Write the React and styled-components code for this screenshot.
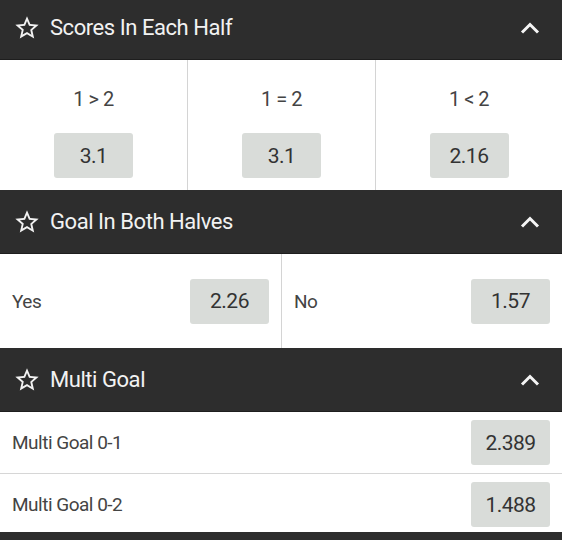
import React from "react";
import styled, { createGlobalStyle } from "styled-components";
import { MdStarBorder } from "react-icons/md";

const GlobalStyle = createGlobalStyle`
  body {
    margin: 0;
    background: #fff;
    font-family: Roboto, "Noto Sans", sans-serif;
  }
`;

const Page = styled.div`
  width: 562px;
  margin-top: -4px;
  overflow: hidden;
`;

const Header = styled.div`
  height: 64px;
  background: #2d2d2d;
  display: flex;
  align-items: center;
  padding: 0 21px 0 13px;
  color: #f2f2f2;
  border-bottom: 1px solid #1e1e1e;
  box-sizing: border-box;
`;

const Title = styled.span`
  flex: 1;
  margin-left: 9px;
  font-size: 22px;
  letter-spacing: -0.45px;
`;

const Odds = styled.div`
  width: 79px;
  height: 45px;
  border-radius: 3px;
  background: #d9dcd9;
  color: #333;
  font-size: 21px;
  letter-spacing: -0.5px;
  display: flex;
  align-items: center;
  justify-content: center;
  flex-shrink: 0;
`;

const ThreeWay = styled.div`
  display: grid;
  grid-template-columns: 187px 188px 187px;
  height: 130px;
`;

const ThreeCell = styled.div`
  display: flex;
  flex-direction: column;
  align-items: center;
  padding-top: 28px;
  box-sizing: border-box;
  border-left: ${(p) => (p.$first ? "none" : "1px solid #d4d4d4")};
`;

const ThreeLabel = styled.div`
  font-size: 20px;
  letter-spacing: -0.5px;
  color: #444;
  height: 22px;
  line-height: 22px;
  margin-bottom: 23px;
`;

const TwoWay = styled.div`
  display: grid;
  grid-template-columns: 281px 281px;
  height: 94px;
`;

const TwoCell = styled.div`
  display: flex;
  align-items: center;
  justify-content: space-between;
  padding: 0 12px;
  border-left: ${(p) => (p.$first ? "none" : "1px solid #d4d4d4")};
`;

const Label = styled.span`
  font-size: 19px;
  letter-spacing: -0.5px;
  color: #444;
`;

const ListRow = styled.div`
  display: flex;
  align-items: center;
  justify-content: space-between;
  padding: ${(p) => (p.$last ? "8px 12px 5px" : "8px 12px")};
  border-bottom: ${(p) => (p.$last ? "none" : "1px solid #d6d6d6")};
`;

const Chevron = () => (
  <svg width="22" height="14" viewBox="0 0 22 14">
    <path
      d="M3 11.5 L11 3.5 L19 11.5"
      fill="none"
      stroke="#f5f5f5"
      strokeWidth="3"
    />
  </svg>
);

const SectionHeader = ({ title }) => (
  <Header>
    <MdStarBorder size={28} />
    <Title>{title}</Title>
    <Chevron />
  </Header>
);

const App = () => {
  const halves = [
    { label: "1 > 2", odds: "3.1" },
    { label: "1 = 2", odds: "3.1" },
    { label: "1 < 2", odds: "2.16" },
  ];
  const both = [
    { label: "Yes", odds: "2.26" },
    { label: "No", odds: "1.57" },
  ];
  const multi = [
    { label: "Multi Goal 0-1", odds: "2.389" },
    { label: "Multi Goal 0-2", odds: "1.488" },
  ];

  return (
    <>
      <GlobalStyle />
      <Page>
        <SectionHeader title="Scores In Each Half" />
        <ThreeWay>
          {halves.map((h, i) => (
            <ThreeCell key={h.label} $first={i === 0}>
              <ThreeLabel>{h.label}</ThreeLabel>
              <Odds>{h.odds}</Odds>
            </ThreeCell>
          ))}
        </ThreeWay>

        <SectionHeader title="Goal In Both Halves" />
        <TwoWay>
          {both.map((b, i) => (
            <TwoCell key={b.label} $first={i === 0}>
              <Label>{b.label}</Label>
              <Odds>{b.odds}</Odds>
            </TwoCell>
          ))}
        </TwoWay>

        <SectionHeader title="Multi Goal" />
        {multi.map((m, i) => (
          <ListRow key={m.label} $last={i === multi.length - 1}>
            <Label>{m.label}</Label>
            <Odds>{m.odds}</Odds>
          </ListRow>
        ))}
        <Header />
      </Page>
    </>
  );
};

export default App;
